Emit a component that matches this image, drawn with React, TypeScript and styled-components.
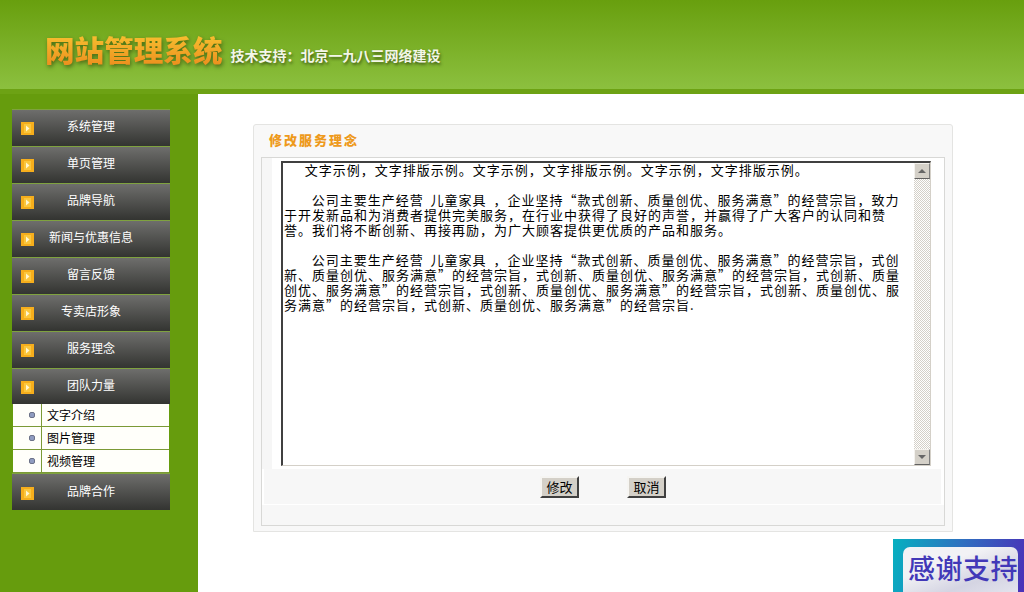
import React from 'react';
import styled, { createGlobalStyle } from 'styled-components';

const Global = createGlobalStyle`
  html, body { margin: 0; padding: 0; background: #fff; overflow: hidden; }
  body { font-family: "Noto Sans CJK SC", "Liberation Sans", sans-serif; }
`;
const Page = styled.div`width: 1024px; height: 592px; position: relative; overflow: hidden; display: flex; flex-direction: column;`;
const Header = styled.header`
  height: 89px; flex: none; box-sizing: border-box; padding: 30px 0 0 45px;
  display: flex; align-items: flex-start; gap: 8px;
  background: linear-gradient(#689f0e, #8cc03f);
`;
const Logo = styled.div`
  font-size: 29.6px; line-height: 40px; font-weight: 900; letter-spacing: 0;
  color: #ee9a1f; background: linear-gradient(#f8c030 10%, #ec8f1e 90%);
  -webkit-background-clip: text; background-clip: text; -webkit-text-fill-color: transparent;
  filter: drop-shadow(1px 2px 2px rgba(50,70,10,.7));
  transform: scaleY(.98);
`;
const Tagline = styled.div`
  font-size: 14px; line-height: 20px; margin-top: 15px; font-weight: 700; color: #f3f6e8;
  text-shadow: 1px 2px 3px rgba(40,60,10,.75);
`;
const Band = styled.div`height: 5px; flex: none; background: #6da214;`;
const Body = styled.div`flex: 1; display: flex; min-height: 0;`;
const Sidebar = styled.aside`width: 198px; flex: none; box-sizing: border-box; background: #669c0d; padding: 15px 0 0 12px;`;
const Menu = styled.nav`width: 158px; display: flex; flex-direction: column;`;
const MenuItem = styled.div<{ $h?: number; $pad?: number }>`
  height: ${p => p.$h ?? 37}px; flex: none; box-sizing: border-box; display: flex; align-items: flex-start;
  padding-top: ${p => p.$pad ?? 0}px;
  border-top: 1px solid #7fa23f;
  background: linear-gradient(#6e6e6c, #333431);
`;
const MenuIcon = styled.svg`width: 13px; height: 13px; flex: none; margin: 12px 0 0 9px;`;
const MenuLabel = styled.span`
  flex: 1; text-align: center; color: #fff; font-size: 12px; line-height: 16px; margin: 8px 22px 0 0;
`;
const SubItem = styled.div`
  height: 23px; flex: none; box-sizing: border-box; display: flex; align-items: stretch;
  margin: 0 1px; background: #fffffa; border-bottom: 1px solid #7b9a36;
  &:first-of-type { border-top: 1px solid #7b9a36; }
`;
const SubDot = styled.div`
  width: 28px; flex: none; border-right: 1px solid #7b9a36; display: flex; align-items: center; justify-content: flex-end; box-sizing: content-box;
  &::after { content: ""; width: 6px; height: 6px; margin-right: 6px; border-radius: 2px; background: #8f9cc0; border: 1px solid #6c7288; box-sizing: border-box; }
`;
const SubLabel = styled.span`font-size: 12px; line-height: 22px; color: #000; padding-left: 5px;`;
const Main = styled.main`flex: 1; box-sizing: border-box; padding: 30px 0 0 55px; position: relative;`;
const Panel = styled.section`
  width: 700px; height: 408px; box-sizing: border-box; border: 1px solid #e4e4e2; border-radius: 3px 3px 0 0;
  background: #f8f8f8; display: flex; flex-direction: column; padding: 0 7px 5px 7px;
`;
const PanelTitle = styled.h2`
  margin: 0; height: 32px; flex: none; font-size: 13px; line-height: 30px; font-weight: 900; color: #ee9a1c; letter-spacing: 2px; padding-left: 8px;
`;
const Inner = styled.div`
  flex: 1; border: 1px solid #d8d8d6; background: #fff; display: flex; flex-direction: column; box-sizing: border-box;
`;
const EditorRow = styled.div`
  height: 311px; flex: none; box-sizing: border-box; padding: 3px 13px 0 19px; background: linear-gradient(90deg,#f6f6f6 0 10px,#fff 10px);
`;
const Editor = styled.div`
  height: 305px; box-sizing: border-box; display: flex; background: #fff;
  border-top: 2px solid #404040; border-left: 2px solid #404040; border-right: 1px solid #d4d0c8; border-bottom: 1px solid #d4d0c8;
`;
const EditorText = styled.div`
  flex: 1; font-size: 13px; line-height: 15px; letter-spacing: 1px; word-spacing: 3px; color: #000; margin-top: -1px; padding: 0 0 0 1px; white-space: pre;
`;
const Scrollbar = styled.div`
  width: 16px; flex: none; display: flex; flex-direction: column; justify-content: space-between;
  background: repeating-conic-gradient(#d4d0c8 0 25%, #fff 0 50%) 0 0 / 2px 2px;
`;
const ScrollBtn = styled.div<{ $down?: boolean }>`
  height: 16px; box-sizing: border-box; background: #d4d0c8; display: flex; align-items: center; justify-content: center;
  border: 1px solid; border-color: #f4f2ee #808080 #606060 #f4f2ee;
  &::after { content: ""; width: 0; height: 0; border-left: 4px solid transparent; border-right: 4px solid transparent;
    ${p => p.$down ? 'border-top: 4px solid #666;' : 'border-bottom: 4px solid #666;'} }
`;
const Actions = styled.div`
  height: 35px; flex: none; box-sizing: border-box; display: flex; align-items: flex-start; gap: 48px; padding: 7px 0 0 276px; margin: 0 3px 1px 2px; background: #f7f7f7;
`;
const Btn = styled.button`
  width: 39px; height: 22px; padding: 0; font: 13px/18px "Noto Sans CJK SC", sans-serif; color: #000; background: #d4d0c8;
  border: 2px solid; border-color: #f6f5f2 #404040 #404040 #f6f5f2; box-sizing: border-box;
`;
const Footer = styled.div`flex: 1; background: #f7f7f7;`;
const Badge = styled.div`
  position: absolute; right: 0; bottom: 0; width: 131px; height: 53px; box-sizing: border-box; padding: 8px 0 0 10px;
  background: linear-gradient(100deg, #06b0c0, #2f70c0 50%, #4a30b8);
`;
const BadgeText = styled.div`
  width: 115px; height: 60px; box-sizing: border-box; border-radius: 7px; padding-left: 5px; background: linear-gradient(160deg, #f2f2f5 30%, #d4d4e2 60%, #ececf4);
  color: #4238b8; font-size: 27px; line-height: 41px; font-weight: 500; white-space: nowrap; letter-spacing: .5px;
`;

const menuA = ['系统管理','单页管理','品牌导航','新闻与优惠信息','留言反馈','专卖店形象','服务理念'];
const subs = ['文字介绍','图片管理','视频管理'];
const lines = [
'   文字示例，文字排版示例。文字示例，文字排版示例。文字示例，文字排版示例。',
'',
'    公司主要生产经营 儿童家具 ，企业坚持“款式创新、质量创优、服务满意”的经营宗旨，致力',
'于开发新品和为消费者提供完美服务，在行业中获得了良好的声誉，并赢得了广大客户的认同和赞',
'誉。我们将不断创新、再接再励，为广大顾客提供更优质的产品和服务。',
'',
'    公司主要生产经营 儿童家具 ，企业坚持“款式创新、质量创优、服务满意”的经营宗旨，式创',
'新、质量创优、服务满意”的经营宗旨，式创新、质量创优、服务满意”的经营宗旨，式创新、质量',
'创优、服务满意”的经营宗旨，式创新、质量创优、服务满意”的经营宗旨，式创新、质量创优、服',
'务满意”的经营宗旨，式创新、质量创优、服务满意”的经营宗旨.',
];

const Icon = () => (
  <MenuIcon viewBox="0 0 13 13">
    <rect width="13" height="13" fill="#f6ae1c" />
    <rect x="3" y="2" width="7" height="9" fill="#fbc63c" />
    <path d="M5 3.5 L8.5 6.5 L5 9.5 Z" fill="#fff6d0" />
  </MenuIcon>
);

export default function App() {
  return (
    <Page>
      <Global />
      <Header>
        <Logo>网站管理系统</Logo>
        <Tagline>技术支持：北京一九八三网络建设</Tagline>
      </Header>
      <Band />
      <Body>
        <Sidebar>
          <Menu>
            {menuA.map(m => <MenuItem key={m}><Icon /><MenuLabel>{m}</MenuLabel></MenuItem>)}
            <MenuItem $h={36}><Icon /><MenuLabel>团队力量</MenuLabel></MenuItem>
            {subs.map(s => <SubItem key={s}><SubDot /><SubLabel>{s}</SubLabel></SubItem>)}
            <MenuItem $pad={1}><Icon /><MenuLabel>品牌合作</MenuLabel></MenuItem>
          </Menu>
        </Sidebar>
        <Main>
          <Panel>
            <PanelTitle>修改服务理念</PanelTitle>
            <Inner>
              <EditorRow>
                <Editor>
                  <EditorText>{lines.join('\n')}</EditorText>
                  <Scrollbar><ScrollBtn /><ScrollBtn $down /></Scrollbar>
                </Editor>
              </EditorRow>
              <Actions><Btn>修改</Btn><Btn>取消</Btn></Actions>
              <Footer />
            </Inner>
          </Panel>
        </Main>
      </Body>
      <Badge><BadgeText>感谢支持</BadgeText></Badge>
    </Page>
  );
}
